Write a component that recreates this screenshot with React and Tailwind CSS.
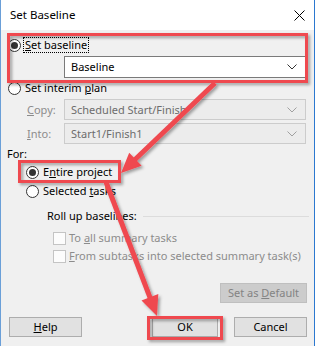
import React from 'react';

const Chevron = ({ color = '#000' }) => (
  <svg width="10" height="6" viewBox="0 0 10 6" fill="none">
    <path d="M0.5 0.5L5 5L9.5 0.5" stroke={color} strokeWidth="1" />
  </svg>
);

const Radio = ({ checked }) => (
  <span className="w-[13px] h-[13px] rounded-full border border-[#333] bg-white flex items-center justify-center shrink-0">
    {checked && <span className="w-[7px] h-[7px] rounded-full bg-[#333]" />}
  </span>
);

const Combo = ({ value, disabled, className = '' }) => (
  <div
    className={`h-[21px] w-[242px] flex items-center justify-between pl-[6px] pr-[8px] border ${
      disabled ? 'bg-[#ececec] border-[#cccccc] text-[#6d6d6d]' : 'bg-white border-[#7a7a7a] text-black'
    } ${className}`}
  >
    <span>{value}</span>
    <Chevron color={disabled ? '#a0a0a0' : '#333'} />
  </div>
);

const Button = ({ children, className = '' }) => (
  <div className={`h-[20px] flex items-center justify-center border bg-[#e1e1e1] border-[#adadad] ${className}`}>
    {children}
  </div>
);

// arrow with a filled head, drawn from (x1,y1) to the tip (x2,y2)
function Arrow({ x1, y1, x2, y2 }) {
  const dx = x2 - x1;
  const dy = y2 - y1;
  const len = Math.hypot(dx, dy);
  const ux = dx / len;
  const uy = dy / len;
  const hl = 20;
  const hw = 9;
  const bx = x2 - ux * hl;
  const by = y2 - uy * hl;
  const pts = [
    [x2, y2],
    [bx - uy * hw, by + ux * hw],
    [bx + uy * hw, by - ux * hw],
  ]
    .map(p => p.join(','))
    .join(' ');
  return (
    <g>
      <line x1={x1} y1={y1} x2={bx + ux * 2} y2={by + uy * 2} stroke="#ef4850" strokeWidth="5" />
      <polygon points={pts} fill="#ef4850" />
    </g>
  );
}

export default function App() {
  return (
    <div
      className="relative w-[317px] h-[346px] overflow-hidden bg-white text-[11px] leading-[16px] text-black whitespace-nowrap"
      style={{ fontFamily: '"Noto Sans", "Liberation Sans", sans-serif' }}
    >
      <div className="w-[315px] h-full bg-[#f0f0f0] border-l border-r border-l-[#6a9fd8] border-r-[#2b78d0] flex flex-col">
        {/* Title bar */}
        <div className="h-[30px] bg-white flex items-center justify-between pl-[9px] pr-[9px] shrink-0 text-[11.5px]">
          <span>Set Baseline</span>
          <svg width="11" height="11" viewBox="0 0 11 11">
            <path d="M0.5 0.5L10.5 10.5M10.5 0.5L0.5 10.5" stroke="#000" strokeWidth="1" />
          </svg>
        </div>

        {/* Set baseline */}
        <div className="mt-[7px] h-[16px] flex items-center pl-[7px]">
          <Radio checked />
          <span className="ml-[2px] border border-dotted border-black px-[1px] leading-[12px] py-[1px]">
            <u>S</u>et baseline
          </span>
        </div>
        <Combo value="Baseline" className="ml-[63px] mt-[3px] h-[22px]" />

        {/* Set interim plan */}
        <div className="mt-[2px] h-[16px] flex items-center pl-[7px]">
          <Radio />
          <span className="ml-[4px]">
            Set interim <u>p</u>lan
          </span>
        </div>
        <div className="mt-[3px] flex items-center">
          <span className="w-[63px] pl-[26px] text-[#8c8c8c]">
            <u>C</u>opy:
          </span>
          <Combo value="Scheduled Start/Finish" disabled />
        </div>
        <div className="mt-[3px] flex items-center">
          <span className="w-[63px] pl-[26px] text-[#8c8c8c]">
            <u>I</u>nto:
          </span>
          <Combo value="Start1/Finish1" disabled />
        </div>

        {/* For */}
        <div className="mt-[2px] h-[16px] pl-[6px] flex items-center">For:</div>
        <div className="mt-[2px] h-[16px] flex items-center pl-[25px]">
          <Radio checked />
          <span className="ml-[4px]">
            E<u>n</u>tire project
          </span>
        </div>
        <div className="mt-[3px] h-[16px] flex items-center pl-[25px]">
          <Radio />
          <span className="ml-[4px]">
            Selected <u>t</u>asks
          </span>
        </div>

        {/* Roll up */}
        <div className="mt-[9px] h-[16px] flex items-center pl-[46px] pr-[5px]">
          <span>Roll up baselines:</span>
          <span className="flex-1 ml-[6px] h-px bg-[#dcdcdc]" />
        </div>
        <div className="mt-[6px] h-[16px] flex items-center pl-[52px] text-[#8c8c8c]">
          <span className="w-[13px] h-[13px] border border-[#c4c4c4] bg-[#fcfcfc] shrink-0" />
          <span className="ml-[3px]">
            To <u>a</u>ll summary tasks
          </span>
        </div>
        <div className="mt-[2px] h-[16px] flex items-center pl-[52px] text-[#8c8c8c]">
          <span className="w-[13px] h-[13px] border border-[#c4c4c4] bg-[#fcfcfc] shrink-0" />
          <span className="ml-[3px]">
            <u>F</u>rom subtasks into selected summary task(s)
          </span>
        </div>

        <div className="mt-[19px] flex justify-end pr-[7px]">
          <div className="w-[87px] h-[20px] flex items-center justify-center border border-[#bfbfbf] bg-[#cccccc] text-[#838383]">
            <span>
              Set as <u>D</u>efault
            </span>
          </div>
        </div>

        {/* Bottom buttons */}
        <div className="mt-[14px] flex items-center pl-[8px] pr-[7px]">
          <Button className="w-[73px]">
            <span>
              <u>H</u>elp
            </span>
          </Button>
          <Button className="w-[66px] ml-[70px] border-[#0078d7]">OK</Button>
          <div className="flex-1" />
          <Button className="w-[73px]">Cancel</Button>
        </div>
      </div>

      {/* Annotations */}
      <svg className="absolute inset-0 pointer-events-none" width="317" height="346" viewBox="0 0 317 346">
        <defs>
          <filter id="sh" x="-10%" y="-10%" width="130%" height="130%">
            <feDropShadow dx="2" dy="2" stdDeviation="1.5" floodColor="#000" floodOpacity="0.35" />
          </filter>
        </defs>
        <g filter="url(#sh)">
          <rect x="8.5" y="34.5" width="298" height="47" fill="none" stroke="#ef4850" strokeWidth="3" />
          <rect x="19.5" y="161.5" width="100" height="20" fill="none" stroke="#ef4850" strokeWidth="3" />
          <rect x="148.5" y="317.5" width="73" height="21" fill="none" stroke="#ef4850" strokeWidth="3" />
          <Arrow x1={215} y1={83} x2={121} y2={173} />
          <Arrow x1={106} y1={182} x2={157} y2={316} />
        </g>
      </svg>
    </div>
  );
}
